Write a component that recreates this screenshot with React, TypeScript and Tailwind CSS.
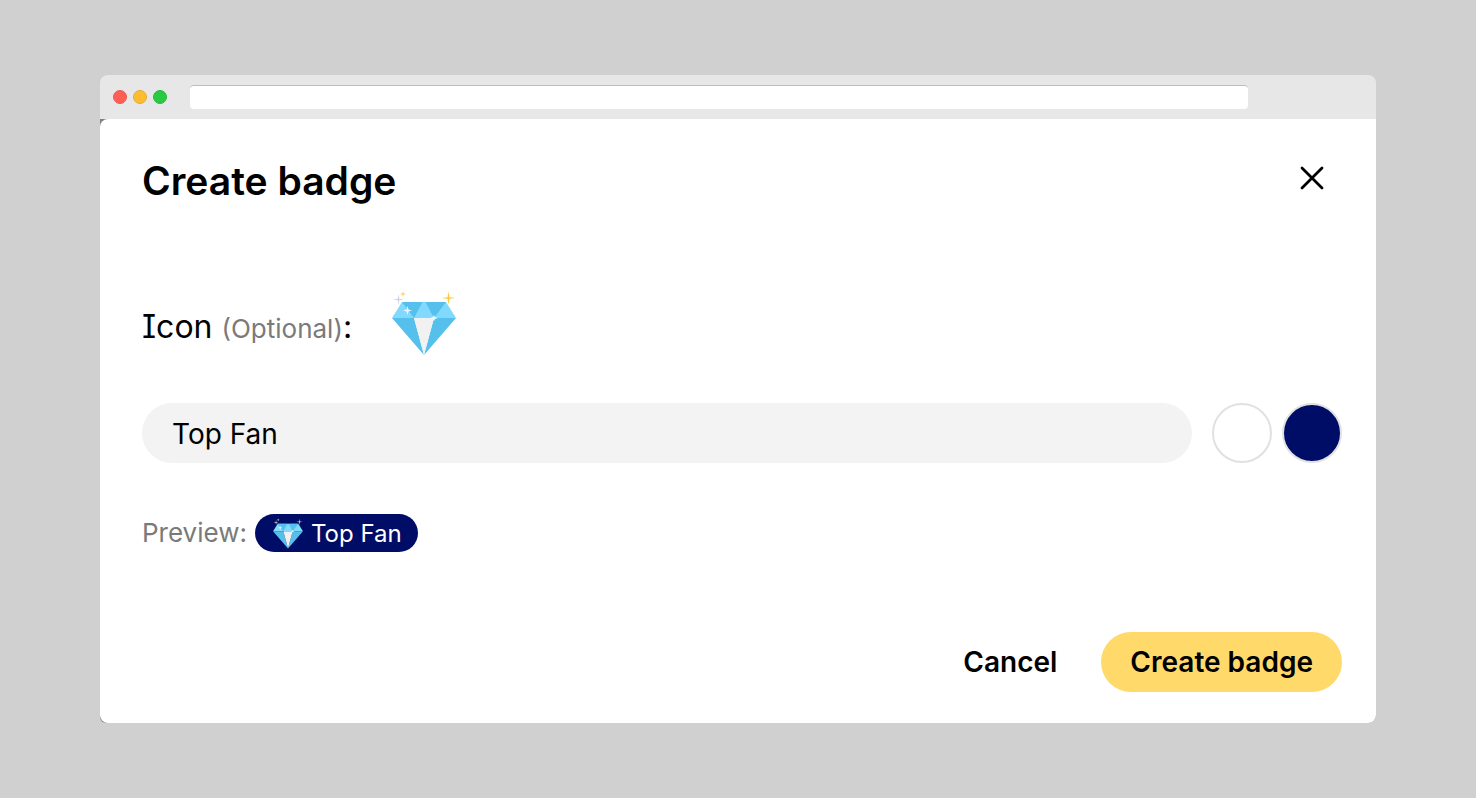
import { useState } from "react";

const Gem = ({ className }: { className: string }) => {
  return (
    <svg viewBox="0 0 64 64" className={className} aria-hidden="true">
      <path d="M10 10h44l10 16H0z" fill="#81d9fd" />
      <path d="M10 10h20.500L22 26zM33.500 10H54L42 26z" fill="#54c0eb" />
      <path d="M0 26h22l10 37zM64 26H42L32 63z" fill="#54c0eb" />
      <path d="M22 26h20L32 63z" fill="#f1f1f1" />
      <path d="M15.500 14l1 3.500 3.500 1-3.500 1-1 3.500-1-3.500-3.500-1 3.500-1zM42 23l1 2 3 1-3 1-1 2-1-2-3-1 3-1z" fill="#e6f8ff" />
      <path d="M6.500 2l.8 4.700 4.700.8-4.700.8-.8 4.700-.8-4.700-4.700-.8 4.700-.8z" fill="#ced5e0" />
      <path d="M11 -1l.7 2.300 2.300.7-2.300.7L11 5l-.7-2.300L8 2l2.300-.7z" fill="#ffd469" />
      <path d="M56.500 -.5l1 5.700 6 .8-6 .8-1 6-1-6-6-.8 6-.8z" fill="#ffc843" />
    </svg>
  );
};

const WindowBar = () => {
  return (
    <div className="flex h-11 items-center rounded-t-lg bg-[#e7e7e7] pl-[13px] pr-32">
      <div className="flex gap-[6px]">
        <span className="size-[14px] rounded-full border border-[#e85b54] bg-[#ff5f57]" />
        <span className="size-[14px] rounded-full border border-[#e5a93b] bg-[#ffbd2e]" />
        <span className="size-[14px] rounded-full border border-[#2cb748] bg-[#28ca42]" />
      </div>
      <input
        type="text"
        aria-label="Address"
        className="ml-[23px] h-6 min-w-0 flex-1 rounded border-t border-[#bdbdbd] bg-white px-2 text-sm outline-none"
      />
    </div>
  );
};

export default function App() {
  const [name, setName] = useState("Top Fan");

  return (
    <div className="min-h-screen bg-[#d0d0d0] px-[100px] py-[75px] font-['Inter',sans-serif] text-black">
      <WindowBar />
      {/* dark backdrop shows through at the rounded left corners */}
      <div className="rounded-br-lg rounded-bl-md bg-[#808080]">
        <form
          className="rounded-l-lg rounded-br-lg bg-white pt-8 pr-[34px] pb-[31px] pl-[42px]"
          onSubmit={(e) => e.preventDefault()}
        >
          <div className="flex items-start justify-between pr-3">
            <h1 className="text-[39px] leading-[60px] font-semibold">Create badge</h1>
            <button type="button" aria-label="Close" className="mt-[10px] p-1">
              <svg viewBox="0 0 28 28" className="size-7" stroke="#000" strokeWidth="2.800" strokeLinecap="round">
                <path d="M4 3l20 20M24 3L4 23" />
              </svg>
            </button>
          </div>

          <div className="mt-20 flex h-[66px] items-center">
            <span className="pt-2 text-[32px] leading-10 [font-feature-settings:'cv08']">
              Icon <span className="text-[26px] text-[#7a7a7a]">(Optional)</span>:
            </span>
            <button type="button" aria-label="Choose icon" className="ml-10">
              <Gem className="size-16 overflow-visible" />
            </button>
          </div>

          <div className="mt-[46px] flex items-center">
            <input
              type="text"
              aria-label="Badge name"
              value={name}
              onChange={(e) => setName(e.target.value)}
              className="h-[60px] min-w-0 flex-1 rounded-full bg-[#f3f3f3] px-[30px] pt-[2px] text-[28px] outline-none"
            />
            <button
              type="button"
              aria-label="Text color"
              className="ml-5 size-[60px] rounded-full border-2 border-[#e1e1e1] bg-white"
            />
            <button
              type="button"
              aria-label="Background color"
              className="ml-[10px] size-[60px] rounded-full border-2 border-[#e1e1e1] bg-[#000d66]"
            />
          </div>

          <div className="mt-[51px] flex items-center">
            <span className="text-[26px] leading-[38px] text-[#7a7a7a]">Preview:</span>
            <span className="ml-2 flex h-[38px] items-center gap-2 rounded-full bg-[#000d66] pt-px pr-4 pl-[18px] text-2xl text-white">
              <Gem className="size-[30px] overflow-visible" />
              {name}
            </span>
          </div>

          <div className="mt-20 flex items-center justify-end gap-11 text-[28px] font-semibold">
            <button type="button">Cancel</button>
            <button type="submit" className="h-[60px] rounded-full bg-[#ffd96a] px-[29px]">
              Create badge
            </button>
          </div>
        </form>
      </div>
    </div>
  );
}
